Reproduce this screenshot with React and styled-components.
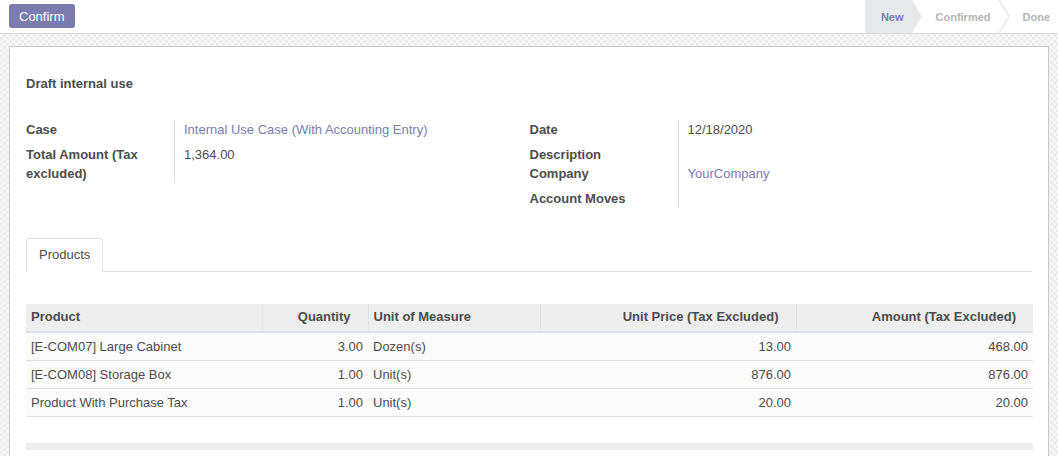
import styled, { createGlobalStyle } from "styled-components";

const GlobalStyle = createGlobalStyle`
  html, body {
    margin: 0;
    padding: 0;
  }
  body {
    font-family: "Liberation Sans", Arial, sans-serif;
    font-size: 13px;
    color: #4c4c4c;
    background: #ffffff;
  }
`;

const Root = styled.div`
  height: 456px;
  overflow: hidden;
  display: flex;
  flex-direction: column;
`;

const ControlPanel = styled.div`
  height: 33px;
  flex: 0 0 auto;
  display: flex;
  justify-content: space-between;
  align-items: stretch;
  padding-left: 9px;
  border-bottom: 1px solid #d9d9d9;
  background: #ffffff;
`;

const PrimaryButton = styled.button`
  align-self: center;
  margin-top: -1px;
  height: 24px;
  padding: 0 10px;
  border: none;
  border-radius: 3px;
  background: #7c7bad;
  color: #ffffff;
  font-family: "Liberation Sans", Arial, sans-serif;
  font-size: 13px;
  cursor: pointer;
`;

const StatusBar = styled.div`
  display: flex;
  align-items: stretch;
`;

const Step = styled.div`
  display: flex;
  align-items: center;
  padding: 0 8px 0 ${(p) => (p.$first ? "16px" : "14px")};
  font-size: 11px;
  font-weight: bold;
  color: ${(p) => (p.$active ? "#7c7bad" : "#b4b4b4")};
  background: ${(p) => (p.$active ? "#e6e8ec" : "transparent")};
`;

const Arrow = styled.svg`
  width: 10px;
  height: 33px;
  flex: 0 0 auto;
  display: block;
`;

const FormBody = styled.div`
  flex: 1 1 auto;
  padding: 12px 9px 0;
  background-color: #f7f7f7;
  background-image: conic-gradient(
    #ececec 25%,
    transparent 0 50%,
    #ececec 0 75%,
    transparent 0
  );
  background-size: 6px 6px;
`;

const Sheet = styled.div`
  background: #ffffff;
  border: 1px solid #c9c9d3;
  border-bottom: none;
  padding: 27px 16px 0;
  min-height: 420px;
`;

const Title = styled.div`
  font-weight: bold;
  line-height: 19.5px;
  margin-bottom: 26px;
`;

const Groups = styled.div`
  display: flex;
  gap: 1px;
`;

const Group = styled.div`
  flex: 1 1 0;
  display: grid;
  grid-template-columns: 149px 1fr;
  align-content: start;
  line-height: 19px;
`;

const Label = styled.div`
  font-weight: bold;
  padding-right: 15px;
  border-right: 1px solid #dcdcdc;
`;

const Value = styled.div`
  padding-left: 9px;
`;

const Field = styled.span`
  display: block;
  margin-bottom: 6px;
  color: ${(p) => (p.$link ? "#7c7bad" : "#4c4c4c")};
`;

const Tabs = styled.div`
  display: flex;
  margin-top: 30px;
  border-bottom: 1px solid #dee2e6;
`;

const Tab = styled.div`
  padding: 6px 12px 7px;
  line-height: 19px;
  margin-bottom: -1px;
  border: 1px solid #dee2e6;
  border-bottom-color: #ffffff;
  border-radius: 3px 3px 0 0;
  background: #ffffff;
`;

const Table = styled.table`
  width: 100%;
  margin-top: 32px;
  border-collapse: collapse;
  table-layout: fixed;
`;

const Th = styled.th`
  background: #eeeeee;
  padding: 3px ${(p) => (p.$num ? "17px" : "5px")} 4px 5px;
  line-height: 20px;
  font-weight: bold;
  text-align: ${(p) => (p.$num ? "right" : "left")};
  border-bottom: 2px solid #dee2e6;
  border-left: 1px solid #e2e2e2;
  white-space: nowrap;

  &:first-child {
    border-left: none;
  }
`;

const Row = styled.tr`
  background: ${(p) => (p.$empty ? "#ffffff" : "#fbfbfb")};
  border-bottom: ${(p) => (p.$empty ? "none" : "1px solid #dee2e6")};
`;

const Td = styled.td`
  padding: 4px 5px ${(p) => (p.$short ? "3px" : "4px")};
  line-height: 19px;
  text-align: ${(p) => (p.$num ? "right" : "left")};
  white-space: nowrap;
`;

const FootCell = styled.td`
  height: 7px;
  padding: 0;
  background: #eeeeee;
`;

const lines = [
  ["[E-COM07] Large Cabinet", "3.00", "Dozen(s)", "13.00", "468.00"],
  ["[E-COM08] Storage Box", "1.00", "Unit(s)", "876.00", "876.00"],
  ["Product With Purchase Tax", "1.00", "Unit(s)", "20.00", "20.00"],
];

const StepArrow = ({ filled }) => (
  <Arrow viewBox="0 0 10 33">
    {filled ? (
      <polygon points="0,0 10,16.5 0,33" fill="#e6e8ec" />
    ) : (
      <polyline
        points="0,0 10,16.5 0,33"
        fill="none"
        stroke="#dcdcdc"
        strokeWidth="1"
      />
    )}
  </Arrow>
);

export default function App() {
  return (
    <Root>
      <GlobalStyle />
      <ControlPanel>
        <PrimaryButton>Confirm</PrimaryButton>
        <StatusBar>
          <Step $active $first>
            New
          </Step>
          <StepArrow filled />
          <Step>Confirmed</Step>
          <StepArrow />
          <Step>Done</Step>
        </StatusBar>
      </ControlPanel>
      <FormBody>
        <Sheet>
          <Title>Draft internal use</Title>
          <Groups>
            <Group>
              <Label>Case</Label>
              <Value>
                <Field $link>Internal Use Case (With Accounting Entry)</Field>
              </Value>
              <Label>Total Amount (Tax excluded)</Label>
              <Value>
                <Field>1,364.00</Field>
              </Value>
            </Group>
            <Group>
              <Label>Date</Label>
              <Value>
                <Field>12/18/2020</Field>
              </Value>
              <Label>Description</Label>
              <Value />
              <Label>Company</Label>
              <Value>
                <Field $link>YourCompany</Field>
              </Value>
              <Label>Account Moves</Label>
              <Value />
            </Group>
          </Groups>
          <Tabs>
            <Tab>Products</Tab>
          </Tabs>
          <Table>
            <colgroup>
              <col style={{ width: 236 }} />
              <col style={{ width: 106 }} />
              <col style={{ width: 172 }} />
              <col style={{ width: 256 }} />
              <col style={{ width: 237 }} />
            </colgroup>
            <thead>
              <tr>
                <Th>Product</Th>
                <Th $num>Quantity</Th>
                <Th>Unit of Measure</Th>
                <Th $num>Unit Price (Tax Excluded)</Th>
                <Th $num>Amount (Tax Excluded)</Th>
              </tr>
            </thead>
            <tbody>
              {lines.map((l) => (
                <Row key={l[0]}>
                  <Td>{l[0]}</Td>
                  <Td $num>{l[1]}</Td>
                  <Td>{l[2]}</Td>
                  <Td $num>{l[3]}</Td>
                  <Td $num>{l[4]}</Td>
                </Row>
              ))}
              <Row $empty>
                <Td $short colSpan={5}>&nbsp;</Td>
              </Row>
            </tbody>
            <tfoot>
              <tr>
                <FootCell colSpan={5} />
              </tr>
            </tfoot>
          </Table>
        </Sheet>
      </FormBody>
    </Root>
  );
}
